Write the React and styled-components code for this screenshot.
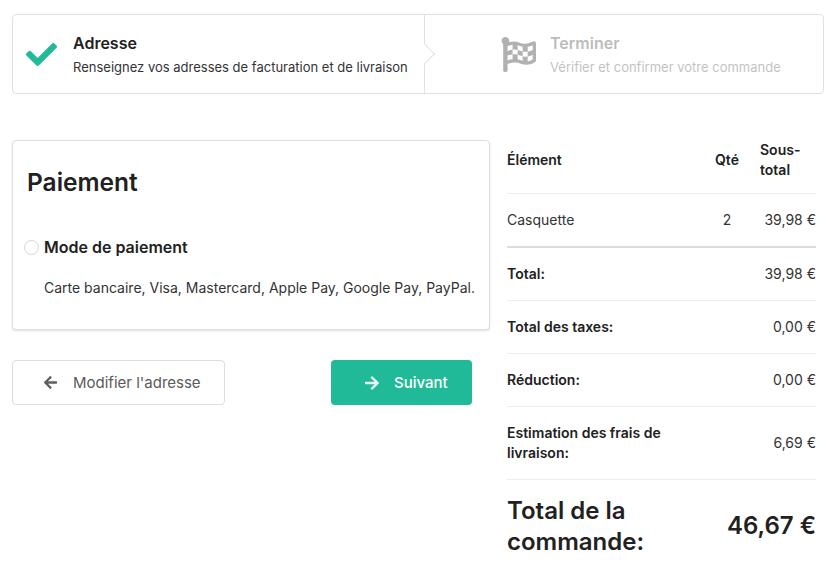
import React from 'react'
import styled, { createGlobalStyle } from 'styled-components'
import { FaCheck, FaFlagCheckered, FaArrowLeft, FaArrowRight } from 'react-icons/fa'

const GlobalStyle = createGlobalStyle`
    html, body {
        margin: 0;
        padding: 0;
        background: #fff;
        font-family: Inter, "Liberation Sans", sans-serif;
        color: #212121;
    }
    * {
        box-sizing: border-box;
    }
`

const Page = styled.div`
    width: 837px;
    height: 585px;
    overflow: hidden;
    padding: 14px 13px 0 12px;
`

const Steps = styled.div`
    display: flex;
    width: 812px;
    height: 80px;
    border: 1px solid #e0e1e2;
    border-radius: 4px;
`

const Step = styled.div`
    display: flex;
    flex: 0 0 ${props => props.$width}px;
    align-items: center;
    gap: ${props => props.$gap}px;
    padding-left: ${props => props.$pad}px;
    opacity: ${props => props.$disabled ? 0.3 : 1};
`

const Divider = styled.div`
    position: relative;
    flex: 0 0 1px;
    background: #e0e1e2;

    &::after {
        content: '';
        position: absolute;
        top: 50%;
        left: -7px;
        width: 14px;
        height: 14px;
        background: #fff;
        border-top: 1px solid #e0e1e2;
        border-right: 1px solid #e0e1e2;
        transform: translateY(-50%) rotate(45deg);
    }
`

const StepIcon = styled.span`
    display: flex;
    font-size: ${props => props.$size}px;
    color: ${props => props.$color};
`

const StepBody = styled.div`
    padding-top: 2px;
`

const StepTitle = styled.div`
    font-size: 16px;
    font-weight: 600;
    line-height: 20px;
    margin-bottom: 4px;
`

const StepText = styled.div`
    font-size: 13px;
    line-height: 20px;
    white-space: nowrap;
    color: #333;
`

const Columns = styled.div`
    display: flex;
    align-items: flex-start;
    margin-top: 40px;
`

const Left = styled.div`
    flex: 0 0 478px;
    padding-top: 6px;
`

const Card = styled.div`
    height: 190px;
    padding: 26px 11px 0;
    background: #fff;
    border: 1px solid #dedfe0;
    border-radius: 4px;
    box-shadow: 0 1px 2px rgba(34, 36, 38, 0.15);
`

const CardTitle = styled.h2`
    margin: 0 0 0 3px;
    font-size: 24.5px;
    font-weight: 600;
    line-height: 30px;
`

const RadioRow = styled.label`
    display: flex;
    align-items: center;
    gap: 5px;
    margin-top: 40px;
    font-size: 16px;
    font-weight: 600;
    line-height: 20px;
`

const RadioDot = styled.span`
    flex: 0 0 15px;
    height: 15px;
    border: 1px solid #d4d4d5;
    border-radius: 50%;
`

const RadioText = styled.p`
    margin: 21px 0 0 20px;
    font-size: 14px;
    line-height: 20px;
    white-space: nowrap;
    color: #333;
`

const Buttons = styled.div`
    display: flex;
    justify-content: space-between;
    width: 460px;
    margin-top: 30px;
`

const Button = styled.button`
    display: flex;
    align-items: center;
    gap: ${props => props.$primary ? '14px' : '15px'};
    width: ${props => props.$primary ? '141px' : '213px'};
    height: 45px;
    padding: 0 0 0 ${props => props.$primary ? '33px' : '30px'};
    font-family: inherit;
    font-size: 15px;
    font-weight: ${props => props.$primary ? 500 : 400};
    color: ${props => props.$primary ? '#fff' : '#5a5a5a'};
    background: ${props => props.$primary ? '#21ba99' : '#fff'};
    border: ${props => props.$primary ? 'none' : '1px solid #dcddde'};
    border-radius: 4px;

    svg {
        font-size: ${props => props.$primary ? '16px' : '15px'};
        color: ${props => props.$primary ? '#e6f7f3' : '#5f5f5f'};
    }
`

const Summary = styled.table`
    width: 309px;
    margin-left: 17px;
    border-collapse: collapse;
    table-layout: fixed;
    font-size: 14px;
    line-height: 20px;
`

const Cell = styled.td`
    height: ${props => props.$height}px;
    padding: 0 0 ${props => props.$lift || 0}px ${props => props.$indent || 0}px;
    font-size: 14px;
    font-weight: ${props => props.$bold ? 600 : 400};
    text-align: ${props => props.$align || 'left'};
    color: ${props => props.$bold ? '#212121' : '#333'};
    white-space: ${props => props.$nowrap ? 'nowrap' : 'normal'};
    border-bottom: ${props => props.$line || 1}px solid ${props => props.$line ? '#dcdcdc' : '#ececec'};
`

const GrandCell = styled.td`
    padding: 15px 0 0;
    font-size: 24px;
    font-weight: 600;
    line-height: 31px;
    text-align: ${props => props.$align || 'left'};
    white-space: ${props => props.$nowrap ? 'nowrap' : 'normal'};
    color: #212121;
`

const rows = [
    { label: 'Total:', value: '39,98 €', height: 53 },
    { label: 'Total des taxes:', value: '0,00 €', height: 53 },
    { label: 'Réduction:', value: '0,00 €', height: 53 },
    { label: 'Estimation des frais de livraison:', value: '6,69 €', height: 73 },
]

export default function App() {
    return (
        <Page>
            <GlobalStyle />
            <Steps>
                <Step $width={411} $gap={16} $pad={13}>
                    <StepIcon $size={31} $color="#21ba99"><FaCheck /></StepIcon>
                    <StepBody>
                        <StepTitle>Adresse</StepTitle>
                        <StepText>Renseignez vos adresses de facturation et de livraison</StepText>
                    </StepBody>
                </Step>
                <Divider />
                <Step $width={398} $gap={14} $pad={76} $disabled>
                    <StepIcon $size={35} $color="#000"><FaFlagCheckered /></StepIcon>
                    <StepBody>
                        <StepTitle>Terminer</StepTitle>
                        <StepText>Vérifier et confirmer votre commande</StepText>
                    </StepBody>
                </Step>
            </Steps>
            <Columns>
                <Left>
                    <Card>
                        <CardTitle>Paiement</CardTitle>
                        <RadioRow><RadioDot />Mode de paiement</RadioRow>
                        <RadioText>Carte bancaire, Visa, Mastercard, Apple Pay, Google Pay, PayPal.</RadioText>
                    </Card>
                    <Buttons>
                        <Button><FaArrowLeft />Modifier l'adresse</Button>
                        <Button $primary><FaArrowRight />Suivant</Button>
                    </Buttons>
                </Left>
                <Summary>
                    <colgroup>
                        <col style={{ width: 197 }} />
                        <col style={{ width: 46 }} />
                        <col style={{ width: 66 }} />
                    </colgroup>
                    <thead>
                        <tr>
                            <Cell as="th" $bold $height={59} $lift={6}>Élément</Cell>
                            <Cell as="th" $bold $height={59} $lift={6} $align="center">Qté</Cell>
                            <Cell as="th" $bold $height={59} $lift={6} $indent={10}>Sous-total</Cell>
                        </tr>
                    </thead>
                    <tbody>
                        <tr>
                            <Cell $height={54} $line={2}>Casquette</Cell>
                            <Cell $height={54} $line={2} $align="center">2</Cell>
                            <Cell $height={54} $line={2} $align="right" $nowrap>39,98 €</Cell>
                        </tr>
                        {rows.map(row => (
                            <tr key={row.label}>
                                <Cell $bold $height={row.height}>{row.label}</Cell>
                                <Cell $height={row.height} $align="right" colSpan={2}>{row.value}</Cell>
                            </tr>
                        ))}
                        <tr>
                            <GrandCell>Total de la commande:</GrandCell>
                            <GrandCell $align="right" $nowrap colSpan={2}>46,67 €</GrandCell>
                        </tr>
                    </tbody>
                </Summary>
            </Columns>
        </Page>
    )
}
